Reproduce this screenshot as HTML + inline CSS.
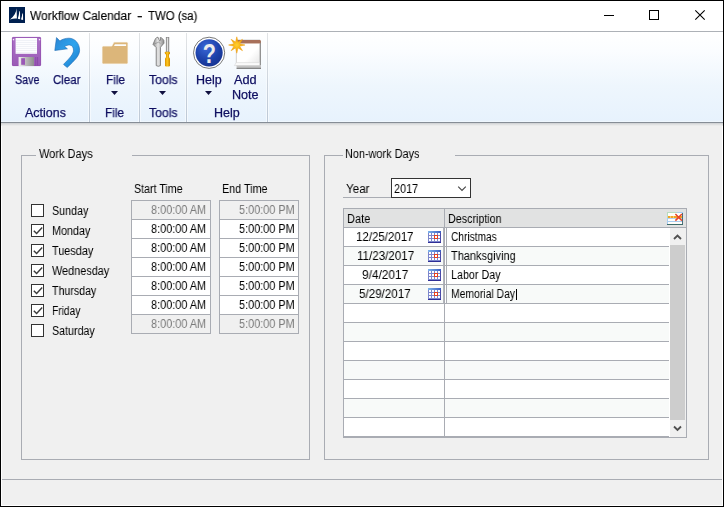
<!DOCTYPE html>
<html><head><meta charset="utf-8"><title>Workflow Calendar</title>
<style>
html,body{margin:0;padding:0;}
body{width:724px;height:507px;overflow:hidden;background:#f0f0f0;position:relative;font-family:"Liberation Sans",sans-serif;}
.a{position:absolute;}
.t{position:absolute;white-space:nowrap;transform-origin:0 0;line-height:normal;will-change:transform;}
.gl{position:absolute;background:#a9acb3;}
.cb{position:absolute;width:11px;height:11px;border:1px solid #333;background:#fff;}
.tb{position:absolute;width:78px;height:18px;border:1px solid #a9acb3;border-top:none;background:#fff;}
.tb.d{background:#f0f0f0;}
</style></head><body>
<!-- window frame -->
<div class="a" style="left:0;top:0;width:724px;height:507px;box-sizing:border-box;border:1px solid #000;"></div>
<div class="a" style="left:1px;top:1px;width:722px;height:505px;box-sizing:border-box;border:1px solid #fff;"></div>
<!-- title bar -->
<div class="a" style="left:1px;top:1px;width:722px;height:30px;background:#fff;"></div>
<div class="a" style="left:1px;top:31px;width:722px;height:1px;background:#adb1b7;"></div>
<svg class="a" style="left:9px;top:7px" width="16" height="16" viewBox="0 0 16 16"><rect width="16" height="16" fill="#002050"/><path d="M7.6 1.2 C7.4 5 5 9.5 1 12.6 C3.5 11.6 6 11.2 7.9 11.6 Z" fill="#fff"/><path d="M10.3 4.6 L11 4.1 L11.1 12.3 L8.8 11.8 C9.6 9.4 10.1 7 10.3 4.6Z" fill="#fff"/><path d="M13.3 6.8 L14 6.3 L14.1 12.9 L12 12.4 C12.7 10.4 13.1 8.6 13.3 6.8 Z" fill="#fff"/></svg>
<!-- window buttons -->
<svg class="a" style="left:600px;top:5px" width="120" height="22" viewBox="600 5 120 22" shape-rendering="crispEdges"><rect x="604" y="15" width="10" height="1" fill="#000"/><rect x="649.5" y="10.5" width="9" height="9" fill="none" stroke="#000" stroke-width="1"/><g shape-rendering="auto"><path d="M695.3 10.3 L704.7 19.7 M704.7 10.3 L695.3 19.7" stroke="#000" stroke-width="1.1" fill="none"/></g></svg>
<!-- ribbon -->
<div class="a" style="left:1px;top:32px;width:722px;height:90px;background:linear-gradient(#ffffff 0%,#fbfdff 20%,#eef6fd 60%,#e7f2fd 100%);"></div>
<div class="a" style="left:1px;top:121px;width:722px;height:1px;background:#eff7fe;"></div>
<div class="a" style="left:1px;top:122px;width:722px;height:1px;background:#868d96;"></div>
<div class="a" style="left:1px;top:123px;width:722px;height:1px;background:#d3d5d7;"></div>
<div class="a" style="left:1px;top:124px;width:722px;height:1px;background:#e0e1e2;"></div>
<div class="a" style="left:1px;top:125px;width:722px;height:1px;background:#eaebeb;"></div>
<!-- ribbon separators -->
<div class="a" style="left:88px;top:33px;width:3px;height:89px;background:linear-gradient(rgba(255,255,255,0.3),rgba(255,255,255,0.55));"></div><div class="a" style="left:89px;top:33px;width:1px;height:89px;background:linear-gradient(#e2e4e6,#bcc8d6);"></div>
<div class="a" style="left:138px;top:33px;width:3px;height:89px;background:linear-gradient(rgba(255,255,255,0.3),rgba(255,255,255,0.55));"></div><div class="a" style="left:139px;top:33px;width:1px;height:89px;background:linear-gradient(#e2e4e6,#bcc8d6);"></div>
<div class="a" style="left:185px;top:33px;width:3px;height:89px;background:linear-gradient(rgba(255,255,255,0.3),rgba(255,255,255,0.55));"></div><div class="a" style="left:186px;top:33px;width:1px;height:89px;background:linear-gradient(#e2e4e6,#bcc8d6);"></div>
<div class="a" style="left:266px;top:33px;width:3px;height:89px;background:linear-gradient(rgba(255,255,255,0.3),rgba(255,255,255,0.55));"></div><div class="a" style="left:267px;top:33px;width:1px;height:89px;background:linear-gradient(#e2e4e6,#bcc8d6);"></div>
<svg class="a" style="left:2px;top:33px" width="270" height="40" viewBox="2 33 270 40">
<defs>
<linearGradient id="gp" x1="0" y1="0" x2="0" y2="1"><stop offset="0" stop-color="#ad74c8"/><stop offset="1" stop-color="#9a5ab6"/></linearGradient>
<linearGradient id="gs" x1="0" y1="0" x2="1" y2="0"><stop offset="0" stop-color="#f2f2f2"/><stop offset="0.5" stop-color="#b8b8b8"/><stop offset="1" stop-color="#8e8e8e"/></linearGradient>
<linearGradient id="gb" x1="0" y1="0" x2="1" y2="1"><stop offset="0" stop-color="#2a86d4"/><stop offset="0.5" stop-color="#2ea4ee"/><stop offset="1" stop-color="#1a78c8"/></linearGradient>
<linearGradient id="gw" x1="0" y1="0" x2="1" y2="0"><stop offset="0" stop-color="#8a8a8a"/><stop offset="0.45" stop-color="#e6e6e6"/><stop offset="1" stop-color="#8c8c8c"/></linearGradient>
<linearGradient id="gy" x1="0" y1="0" x2="1" y2="0"><stop offset="0" stop-color="#d89000"/><stop offset="0.45" stop-color="#ffc820"/><stop offset="1" stop-color="#d08a00"/></linearGradient>
<radialGradient id="gh" cx="0.4" cy="0.3" r="0.8"><stop offset="0" stop-color="#3a68d8"/><stop offset="0.6" stop-color="#1c40a8"/><stop offset="1" stop-color="#16308c"/></radialGradient>
<linearGradient id="gn" x1="0" y1="0" x2="1" y2="1"><stop offset="0" stop-color="#ffffff"/><stop offset="0.6" stop-color="#ffffff"/><stop offset="1" stop-color="#e4e4e4"/></linearGradient>
<radialGradient id="gst" cx="0.5" cy="0.5" r="0.5"><stop offset="0" stop-color="#ffd030"/><stop offset="1" stop-color="#f09800"/></radialGradient>
</defs>
<!-- save -->
<rect x="12" y="37" width="29" height="29" rx="1.2" fill="url(#gp)"/>
<rect x="12.4" y="37.4" width="28.2" height="28.2" rx="1" fill="none" stroke="#9452b0" stroke-width="0.8"/>
<rect x="15.6" y="38" width="21.4" height="15.8" fill="#fdfdff"/>
<path d="M16 40.5H36.6M16 42.5H36.6M16 44.5H36.6M16 46.5H36.6M16 48.5H36.6M16 50.5H36.6M16 52.5H36.6" stroke="#e9ecf3" stroke-width="0.7"/>
<rect x="12.8" y="39" width="1.3" height="1.3" fill="#f4ecf8"/><rect x="38.9" y="39" width="1.3" height="1.3" fill="#f4ecf8"/>
<rect x="18.6" y="57" width="15.4" height="9" fill="url(#gs)"/>
<rect x="21.2" y="58.2" width="3.8" height="6.6" fill="#9a58b6"/>
<path d="M35.8 57V65.5M37.6 57V65.5" stroke="#8744a6" stroke-width="0.8"/>
<!-- clear -->
<path d="M56.5 37.6 L54.8 50.5 L67.4 48.8 L64.6 46.5 C66 45.5 67.6 45 69.6 45 C71.9 45 73.5 47.2 73.5 50.2 C73.5 54 70.2 57.6 63.5 64.4 L67.2 67.5 C74.8 60.2 79.6 55.8 79.6 50.2 C79.6 43.6 74.9 38.2 68.9 38.2 C65.6 38.2 62.2 39.2 59.9 41 Z" fill="url(#gb)" stroke="#1b68b2" stroke-width="0.6" stroke-linejoin="round"/>
<!-- file -->
<path d="M103.5 46 H111.8 L113.6 42.6 Q113.9 42 114.6 42 H126.8 Q128 42 128 43.2 V62.8 Q128 64 126.8 64 H103.2 Q102 64 102 62.8 V47.4 Q102 46 103.5 46 Z" fill="#dcb67a" stroke="#fbfaf6" stroke-width="0.8"/>
<path d="M114.9 44.2 H126.1 V46 H114 Z" fill="#fdfdfd"/>
<!-- tools -->
<path d="M156.2 65.6 V47.6 L153 44.4 L155.4 38.8 L156.6 37.6 L158 37.2 L159.6 40.8 L160.7 40.2 L160.1 37.7 L161.3 37.6 L163.8 40.2 L164 43.2 L160.5 47.2 V65.6 Q158.3 67 156.2 65.6 Z" fill="url(#gw)" stroke="#747474" stroke-width="0.8" stroke-linejoin="round"/>
<path d="M154.2 44 L158.6 42.2 L160.4 43.4" stroke="#808080" stroke-width="0.6" fill="none"/>
<rect x="166.2" y="37.3" width="2.7" height="14.6" fill="url(#gw)" stroke="#7c7c7c" stroke-width="0.6"/>
<rect x="164.9" y="51.8" width="5.1" height="2.4" rx="0.5" fill="url(#gy)"/>
<rect x="166" y="54" width="3" height="4.2" fill="url(#gy)"/>
<rect x="165" y="57.6" width="5" height="8.8" rx="1.2" fill="url(#gy)"/>
<!-- help -->
<circle cx="209.1" cy="52.8" r="15.6" fill="#fff" stroke="#6a6a6a" stroke-width="0.9"/>
<circle cx="209.1" cy="52.8" r="13.6" fill="url(#gh)"/>
<text x="0" y="63.4" text-anchor="middle" transform="translate(209.3 0) scale(0.8 1)" font-family="Liberation Sans, sans-serif" font-weight="bold" font-size="27" fill="#ececec">?</text>
<!-- add note -->
<path d="M259.6 41 H261 V68.6 H259.6 Z" fill="#8e8e8e"/>
<rect x="236.6" y="65" width="24.4" height="3.8" fill="#c4c4c4"/>
<rect x="236.6" y="67.8" width="24.4" height="1" fill="#747474"/>
<rect x="236.2" y="40" width="23.6" height="25.2" fill="url(#gn)" stroke="#b4b4b4" stroke-width="0.6"/>
<path d="M236.2 62.6 L234.4 65.6 H259.6 V62.6 Z" fill="#fafafa" stroke="#c8c8c8" stroke-width="0.4"/>
<rect x="236.2" y="40" width="24.6" height="3.6" rx="1" fill="#a8705a"/>
<rect x="236.2" y="43.2" width="23.4" height="0.7" fill="#d8c0b4"/>
<path d="M236.8 36.8 L238 42.1 L242.5 39.3 L239.7 43.8 L245 45 L239.7 46.2 L242.5 50.7 L238 47.9 L236.8 53.2 L235.6 47.9 L231.1 50.7 L233.9 46.2 L228.6 45 L233.9 43.8 L231.1 39.3 L235.6 42.1 Z" fill="url(#gst)" stroke="#f0a010" stroke-width="0.5"/>
</svg>

<!-- dropdown arrows -->
<svg class="a" style="left:100px;top:88px" width="130" height="10" viewBox="100 88 130 10"><path d="M111 91 L118 91 L114.5 95 Z M159 91 L166 91 L162.5 95 Z M205 91 L212 91 L208.5 95 Z" fill="#101040"/></svg>
<!-- status line -->
<div class="a" style="left:2px;top:479px;width:720px;height:1px;background:#a9acb3;"></div>
<!-- group boxes -->
<div class="gl" style="left:21px;top:155px;width:1px;height:305px;"></div>
<div class="gl" style="left:309px;top:155px;width:1px;height:305px;"></div>
<div class="gl" style="left:21px;top:459px;width:289px;height:1px;"></div>
<div class="gl" style="left:21px;top:155px;width:15px;height:1px;"></div>
<div class="gl" style="left:132px;top:155px;width:178px;height:1px;"></div>
<div class="gl" style="left:324px;top:155px;width:1px;height:305px;"></div>
<div class="gl" style="left:708px;top:155px;width:1px;height:305px;"></div>
<div class="gl" style="left:324px;top:459px;width:385px;height:1px;"></div>
<div class="gl" style="left:324px;top:155px;width:19px;height:1px;"></div>
<div class="gl" style="left:455px;top:155px;width:254px;height:1px;"></div>
<div class="cb" style="left:31px;top:204px;"></div>
<div class="cb" style="left:31px;top:224px;"></div>
<svg class="a" style="left:31px;top:224px" width="13" height="13" viewBox="0 0 13 13"><path d="M2.8 6.8 L5.6 9.6 L11.2 3.6" stroke="#3a3a3a" stroke-width="1.4" fill="none"/></svg>
<div class="cb" style="left:31px;top:244px;"></div>
<svg class="a" style="left:31px;top:244px" width="13" height="13" viewBox="0 0 13 13"><path d="M2.8 6.8 L5.6 9.6 L11.2 3.6" stroke="#3a3a3a" stroke-width="1.4" fill="none"/></svg>
<div class="cb" style="left:31px;top:264px;"></div>
<svg class="a" style="left:31px;top:264px" width="13" height="13" viewBox="0 0 13 13"><path d="M2.8 6.8 L5.6 9.6 L11.2 3.6" stroke="#3a3a3a" stroke-width="1.4" fill="none"/></svg>
<div class="cb" style="left:31px;top:284px;"></div>
<svg class="a" style="left:31px;top:284px" width="13" height="13" viewBox="0 0 13 13"><path d="M2.8 6.8 L5.6 9.6 L11.2 3.6" stroke="#3a3a3a" stroke-width="1.4" fill="none"/></svg>
<div class="cb" style="left:31px;top:304px;"></div>
<svg class="a" style="left:31px;top:304px" width="13" height="13" viewBox="0 0 13 13"><path d="M2.8 6.8 L5.6 9.6 L11.2 3.6" stroke="#3a3a3a" stroke-width="1.4" fill="none"/></svg>
<div class="cb" style="left:31px;top:324px;"></div>
<div class="a" style="left:131px;top:200px;width:80px;height:1px;background:#a9acb3;"></div>
<div class="tb d" style="left:131px;top:201px;"></div>
<div class="tb" style="left:131px;top:220px;"></div>
<div class="tb" style="left:131px;top:239px;"></div>
<div class="tb" style="left:131px;top:258px;"></div>
<div class="tb" style="left:131px;top:277px;"></div>
<div class="tb" style="left:131px;top:296px;"></div>
<div class="tb d" style="left:131px;top:315px;"></div>
<div class="a" style="left:219px;top:200px;width:80px;height:1px;background:#a9acb3;"></div>
<div class="tb d" style="left:219px;top:201px;"></div>
<div class="tb" style="left:219px;top:220px;"></div>
<div class="tb" style="left:219px;top:239px;"></div>
<div class="tb" style="left:219px;top:258px;"></div>
<div class="tb" style="left:219px;top:277px;"></div>
<div class="tb" style="left:219px;top:296px;"></div>
<div class="tb d" style="left:219px;top:315px;"></div>
<div class="a" style="left:343px;top:197px;width:48px;height:1px;background:#a9acb3;"></div>
<div class="a" style="left:391px;top:178px;width:78px;height:18px;border:1px solid #333;background:#fff;"></div>
<svg class="a" style="left:456px;top:184px" width="12" height="10" viewBox="0 0 12 10"><path d="M2.2 2.6 L6 6.4 L9.8 2.6" stroke="#444" stroke-width="1.1" fill="none"/></svg>
<div class="a" style="left:343px;top:208px;width:344px;height:230px;background:#a9acb3;"></div>
<div class="a" style="left:344px;top:209px;width:100px;height:18px;background:#e1e2e2;"></div>
<div class="a" style="left:445px;top:209px;width:241px;height:18px;background:#e1e2e2;"></div>
<div class="a" style="left:344px;top:228px;width:99px;height:18px;background:#fff;"></div>
<div class="a" style="left:443px;top:228px;width:1px;height:18px;background:#b3b5bb;"></div>
<div class="a" style="left:445px;top:228px;width:1px;height:18px;background:#fff;"></div>
<div class="a" style="left:447px;top:228px;width:223px;height:18px;background:#fff;"></div>
<div class="a" style="left:344px;top:247px;width:99px;height:18px;background:#f8faf9;"></div>
<div class="a" style="left:443px;top:247px;width:1px;height:18px;background:#b3b5bb;"></div>
<div class="a" style="left:445px;top:247px;width:1px;height:18px;background:#fff;"></div>
<div class="a" style="left:447px;top:247px;width:223px;height:18px;background:#f8faf9;"></div>
<div class="a" style="left:344px;top:266px;width:99px;height:18px;background:#fff;"></div>
<div class="a" style="left:443px;top:266px;width:1px;height:18px;background:#b3b5bb;"></div>
<div class="a" style="left:445px;top:266px;width:1px;height:18px;background:#fff;"></div>
<div class="a" style="left:447px;top:266px;width:223px;height:18px;background:#fff;"></div>
<div class="a" style="left:344px;top:285px;width:99px;height:18px;background:#f8faf9;"></div>
<div class="a" style="left:443px;top:285px;width:1px;height:18px;background:#b3b5bb;"></div>
<div class="a" style="left:445px;top:285px;width:1px;height:18px;background:#fff;"></div>
<div class="a" style="left:447px;top:285px;width:223px;height:18px;background:#f8faf9;"></div>
<div class="a" style="left:344px;top:304px;width:100px;height:18px;background:#fff;"></div>
<div class="a" style="left:445px;top:304px;width:225px;height:18px;background:#fff;"></div>
<div class="a" style="left:344px;top:323px;width:100px;height:18px;background:#f8faf9;"></div>
<div class="a" style="left:445px;top:323px;width:225px;height:18px;background:#f8faf9;"></div>
<div class="a" style="left:344px;top:342px;width:100px;height:18px;background:#fff;"></div>
<div class="a" style="left:445px;top:342px;width:225px;height:18px;background:#fff;"></div>
<div class="a" style="left:344px;top:361px;width:100px;height:18px;background:#f8faf9;"></div>
<div class="a" style="left:445px;top:361px;width:225px;height:18px;background:#f8faf9;"></div>
<div class="a" style="left:344px;top:380px;width:100px;height:18px;background:#fff;"></div>
<div class="a" style="left:445px;top:380px;width:225px;height:18px;background:#fff;"></div>
<div class="a" style="left:344px;top:399px;width:100px;height:18px;background:#f8faf9;"></div>
<div class="a" style="left:445px;top:399px;width:225px;height:18px;background:#f8faf9;"></div>
<div class="a" style="left:344px;top:418px;width:100px;height:18px;background:#fff;"></div>
<div class="a" style="left:445px;top:418px;width:225px;height:18px;background:#fff;"></div>
<div class="a" style="left:669px;top:228px;width:1px;height:209px;background:#fff;"></div>
<div class="a" style="left:670px;top:228px;width:16px;height:209px;background:#f0f0f0;"></div>
<div class="a" style="left:670px;top:245px;width:15px;height:175px;background:#cdcdcd;"></div>
<svg class="a" style="left:670px;top:228px" width="16" height="17" viewBox="0 0 16 17"><path d="M4 11 L7.5 7.5 L11 11" stroke="#505050" stroke-width="1.8" fill="none"/></svg>
<svg class="a" style="left:670px;top:420px" width="16" height="17" viewBox="0 0 16 17"><path d="M4 6.5 L7.5 10 L11 6.5" stroke="#505050" stroke-width="1.8" fill="none"/></svg>
<svg class="a" style="left:428px;top:231px" width="13" height="12" viewBox="0 0 13 12" shape-rendering="crispEdges"><defs><linearGradient id="cg" x1="0" x2="1" y1="0" y2="0"><stop offset="0" stop-color="#7eb4ec"/><stop offset="1" stop-color="#3a5ec2"/></linearGradient></defs><rect width="13" height="12" fill="#7c86cc"/><rect x="0" y="0" width="13" height="2" fill="url(#cg)"/><rect x="12" y="2" width="1" height="10" fill="#4a4aa8"/><rect x="0" y="11" width="13" height="1" fill="#2e2e96"/><g fill="#fff"><rect x="1" y="2" width="2" height="2"/><rect x="4" y="2" width="2" height="2"/><rect x="7" y="2" width="2" height="2"/><rect x="10" y="2" width="2" height="2"/><rect x="1" y="5" width="2" height="2"/><rect x="4" y="5" width="2" height="2"/><rect x="10" y="5" width="2" height="2"/><rect x="1" y="8" width="2" height="2"/><rect x="4" y="8" width="2" height="2"/><rect x="7" y="8" width="2" height="2"/><rect x="10" y="8" width="2" height="2"/></g><rect x="6" y="4" width="4" height="4" fill="#e8401c"/><rect x="7" y="5" width="2" height="2" fill="#fff"/></svg>
<svg class="a" style="left:428px;top:250px" width="13" height="12" viewBox="0 0 13 12" shape-rendering="crispEdges"><defs><linearGradient id="cg" x1="0" x2="1" y1="0" y2="0"><stop offset="0" stop-color="#7eb4ec"/><stop offset="1" stop-color="#3a5ec2"/></linearGradient></defs><rect width="13" height="12" fill="#7c86cc"/><rect x="0" y="0" width="13" height="2" fill="url(#cg)"/><rect x="12" y="2" width="1" height="10" fill="#4a4aa8"/><rect x="0" y="11" width="13" height="1" fill="#2e2e96"/><g fill="#fff"><rect x="1" y="2" width="2" height="2"/><rect x="4" y="2" width="2" height="2"/><rect x="7" y="2" width="2" height="2"/><rect x="10" y="2" width="2" height="2"/><rect x="1" y="5" width="2" height="2"/><rect x="4" y="5" width="2" height="2"/><rect x="10" y="5" width="2" height="2"/><rect x="1" y="8" width="2" height="2"/><rect x="4" y="8" width="2" height="2"/><rect x="7" y="8" width="2" height="2"/><rect x="10" y="8" width="2" height="2"/></g><rect x="6" y="4" width="4" height="4" fill="#e8401c"/><rect x="7" y="5" width="2" height="2" fill="#fff"/></svg>
<svg class="a" style="left:428px;top:269px" width="13" height="12" viewBox="0 0 13 12" shape-rendering="crispEdges"><defs><linearGradient id="cg" x1="0" x2="1" y1="0" y2="0"><stop offset="0" stop-color="#7eb4ec"/><stop offset="1" stop-color="#3a5ec2"/></linearGradient></defs><rect width="13" height="12" fill="#7c86cc"/><rect x="0" y="0" width="13" height="2" fill="url(#cg)"/><rect x="12" y="2" width="1" height="10" fill="#4a4aa8"/><rect x="0" y="11" width="13" height="1" fill="#2e2e96"/><g fill="#fff"><rect x="1" y="2" width="2" height="2"/><rect x="4" y="2" width="2" height="2"/><rect x="7" y="2" width="2" height="2"/><rect x="10" y="2" width="2" height="2"/><rect x="1" y="5" width="2" height="2"/><rect x="4" y="5" width="2" height="2"/><rect x="10" y="5" width="2" height="2"/><rect x="1" y="8" width="2" height="2"/><rect x="4" y="8" width="2" height="2"/><rect x="7" y="8" width="2" height="2"/><rect x="10" y="8" width="2" height="2"/></g><rect x="6" y="4" width="4" height="4" fill="#e8401c"/><rect x="7" y="5" width="2" height="2" fill="#fff"/></svg>
<svg class="a" style="left:428px;top:288px" width="13" height="12" viewBox="0 0 13 12" shape-rendering="crispEdges"><defs><linearGradient id="cg" x1="0" x2="1" y1="0" y2="0"><stop offset="0" stop-color="#7eb4ec"/><stop offset="1" stop-color="#3a5ec2"/></linearGradient></defs><rect width="13" height="12" fill="#7c86cc"/><rect x="0" y="0" width="13" height="2" fill="url(#cg)"/><rect x="12" y="2" width="1" height="10" fill="#4a4aa8"/><rect x="0" y="11" width="13" height="1" fill="#2e2e96"/><g fill="#fff"><rect x="1" y="2" width="2" height="2"/><rect x="4" y="2" width="2" height="2"/><rect x="7" y="2" width="2" height="2"/><rect x="10" y="2" width="2" height="2"/><rect x="1" y="5" width="2" height="2"/><rect x="4" y="5" width="2" height="2"/><rect x="10" y="5" width="2" height="2"/><rect x="1" y="8" width="2" height="2"/><rect x="4" y="8" width="2" height="2"/><rect x="7" y="8" width="2" height="2"/><rect x="10" y="8" width="2" height="2"/></g><rect x="6" y="4" width="4" height="4" fill="#e8401c"/><rect x="7" y="5" width="2" height="2" fill="#fff"/></svg>
<svg class="a" style="left:667px;top:212px" width="16" height="13" viewBox="0 0 16 13"><g shape-rendering="crispEdges"><rect width="16" height="13" fill="#fffefa"/><rect x="0" y="0" width="10" height="1" fill="#b8dcc0"/><rect x="10" y="0" width="6" height="1" fill="#a8ccf0"/><rect x="0" y="0" width="1" height="6" fill="#b8dcc0"/><rect x="0" y="6" width="1" height="7" fill="#a8ccf0"/><rect x="1" y="4" width="14" height="2" fill="#f2a424"/><rect x="3" y="4" width="1" height="2" fill="#f8c870"/><rect x="6" y="4" width="1" height="2" fill="#f8c870"/><rect x="1" y="6" width="14" height="1" fill="#b4d2f2"/><rect x="1" y="9" width="14" height="1" fill="#a8ccf0"/><rect x="15" y="1" width="1" height="12" fill="#4a6e7a"/><rect x="0" y="12" width="16" height="1" fill="#3c6a68"/></g><path d="M8.4 2 L14.9 8.6 M14.9 2 L8.4 8.6" stroke="#e8442a" stroke-width="1.5"/></svg>
<div class="a" style="left:516px;top:289px;width:1px;height:11px;background:#000;"></div>
<span id="t0" class="t" style="left:29.92px;top:9.49px;font-size:12.5px;color:#000;transform:scaleX(0.9599);-webkit-text-stroke:0.15px #000;">Workflow Calendar</span>
<span id="t1" class="t" style="left:136.69px;top:9.49px;font-size:12.5px;color:#000;transform:scaleX(1.3460);-webkit-text-stroke:0.15px #000;">-</span>
<span id="t2" class="t" style="left:148.20px;top:9.49px;font-size:12.5px;color:#000;transform:scaleX(0.9109);-webkit-text-stroke:0.15px #000;">TWO (sa)</span>
<span id="t3" class="t" style="-webkit-text-stroke:0.25px currentColor;left:14.98px;top:73.49px;font-size:12.5px;color:#0e0e60;transform:scaleX(0.8608);">Save</span>
<span id="t4" class="t" style="-webkit-text-stroke:0.25px currentColor;left:53.05px;top:73.49px;font-size:12.5px;color:#0e0e60;transform:scaleX(0.9207);">Clear</span>
<span id="t5" class="t" style="-webkit-text-stroke:0.25px currentColor;left:105.84px;top:73.49px;font-size:12.5px;color:#0e0e60;transform:scaleX(0.9390);">File</span>
<span id="t6" class="t" style="-webkit-text-stroke:0.25px currentColor;left:149.11px;top:73.49px;font-size:12.5px;color:#0e0e60;transform:scaleX(0.9754);">Tools</span>
<span id="t7" class="t" style="-webkit-text-stroke:0.25px currentColor;left:195.80px;top:73.49px;font-size:12.5px;color:#0e0e60;transform:scaleX(0.9952);">Help</span>
<span id="t8" class="t" style="-webkit-text-stroke:0.25px currentColor;left:233.89px;top:73.49px;font-size:12.5px;color:#0e0e60;transform:scaleX(1.0166);">Add</span>
<span id="t9" class="t" style="-webkit-text-stroke:0.25px currentColor;left:232.30px;top:88.49px;font-size:12.5px;color:#0e0e60;transform:scaleX(1.0077);">Note</span>
<span id="t10" class="t" style="-webkit-text-stroke:0.25px currentColor;left:24.70px;top:106.49px;font-size:12.5px;color:#0e0e60;transform:scaleX(0.9975);">Actions</span>
<span id="t11" class="t" style="-webkit-text-stroke:0.25px currentColor;left:104.94px;top:106.49px;font-size:12.5px;color:#0e0e60;transform:scaleX(0.9390);">File</span>
<span id="t12" class="t" style="-webkit-text-stroke:0.25px currentColor;left:149.11px;top:106.49px;font-size:12.5px;color:#0e0e60;transform:scaleX(0.9754);">Tools</span>
<span id="t13" class="t" style="-webkit-text-stroke:0.25px currentColor;left:214.01px;top:106.49px;font-size:12.5px;color:#0e0e60;transform:scaleX(0.9829);">Help</span>
<span id="t14" class="t" style="left:38.97px;top:147.49px;font-size:12.5px;color:#000;transform:scaleX(0.8795);">Work Days</span>
<span id="t15" class="t" style="left:52.19px;top:204.49px;font-size:12.5px;color:#000;transform:scaleX(0.8567);">Sunday</span>
<span id="t16" class="t" style="left:52.18px;top:224.49px;font-size:12.5px;color:#000;transform:scaleX(0.8617);">Monday</span>
<span id="t17" class="t" style="left:52.18px;top:244.49px;font-size:12.5px;color:#000;transform:scaleX(0.8707);">Tuesday</span>
<span id="t18" class="t" style="left:52.18px;top:264.49px;font-size:12.5px;color:#000;transform:scaleX(0.8700);">Wednesday</span>
<span id="t19" class="t" style="left:52.19px;top:284.49px;font-size:12.5px;color:#000;transform:scaleX(0.8505);">Thursday</span>
<span id="t20" class="t" style="left:52.21px;top:304.49px;font-size:12.5px;color:#000;transform:scaleX(0.8171);">Friday</span>
<span id="t21" class="t" style="left:52.19px;top:324.49px;font-size:12.5px;color:#000;transform:scaleX(0.8540);">Saturday</span>
<span id="t22" class="t" style="left:133.89px;top:182.49px;font-size:12.5px;color:#000;transform:scaleX(0.8535);">Start Time</span>
<span id="t23" class="t" style="left:221.98px;top:182.49px;font-size:12.5px;color:#000;transform:scaleX(0.8622);">End Time</span>
<span id="t24" class="t" style="left:151.08px;top:203.49px;font-size:12.5px;color:#7a7a7a;transform:scaleX(0.8719);">8:00:00 AM</span>
<span id="t25" class="t" style="left:238.88px;top:203.49px;font-size:12.5px;color:#7a7a7a;transform:scaleX(0.8703);">5:00:00 PM</span>
<span id="t26" class="t" style="left:151.08px;top:222.49px;font-size:12.5px;color:#000;transform:scaleX(0.8719);">8:00:00 AM</span>
<span id="t27" class="t" style="left:238.88px;top:222.49px;font-size:12.5px;color:#000;transform:scaleX(0.8703);">5:00:00 PM</span>
<span id="t28" class="t" style="left:151.08px;top:241.49px;font-size:12.5px;color:#000;transform:scaleX(0.8719);">8:00:00 AM</span>
<span id="t29" class="t" style="left:238.88px;top:241.49px;font-size:12.5px;color:#000;transform:scaleX(0.8703);">5:00:00 PM</span>
<span id="t30" class="t" style="left:151.08px;top:260.49px;font-size:12.5px;color:#000;transform:scaleX(0.8719);">8:00:00 AM</span>
<span id="t31" class="t" style="left:238.88px;top:260.49px;font-size:12.5px;color:#000;transform:scaleX(0.8703);">5:00:00 PM</span>
<span id="t32" class="t" style="left:151.08px;top:279.49px;font-size:12.5px;color:#000;transform:scaleX(0.8719);">8:00:00 AM</span>
<span id="t33" class="t" style="left:238.88px;top:279.49px;font-size:12.5px;color:#000;transform:scaleX(0.8703);">5:00:00 PM</span>
<span id="t34" class="t" style="left:151.08px;top:298.49px;font-size:12.5px;color:#000;transform:scaleX(0.8719);">8:00:00 AM</span>
<span id="t35" class="t" style="left:238.88px;top:298.49px;font-size:12.5px;color:#000;transform:scaleX(0.8703);">5:00:00 PM</span>
<span id="t36" class="t" style="left:151.08px;top:317.49px;font-size:12.5px;color:#7a7a7a;transform:scaleX(0.8719);">8:00:00 AM</span>
<span id="t37" class="t" style="left:238.88px;top:317.49px;font-size:12.5px;color:#7a7a7a;transform:scaleX(0.8703);">5:00:00 PM</span>
<span id="t38" class="t" style="left:345.48px;top:147.49px;font-size:12.5px;color:#000;transform:scaleX(0.8713);">Non-work Days</span>
<span id="t39" class="t" style="left:346.24px;top:182.49px;font-size:12.5px;color:#000;transform:scaleX(0.9308);">Year</span>
<span id="t40" class="t" style="left:394.08px;top:182.49px;font-size:12.5px;color:#000;transform:scaleX(0.8680);">2017</span>
<span id="t41" class="t" style="left:347.07px;top:211.99px;font-size:12.5px;color:#000;transform:scaleX(0.8847);">Date</span>
<span id="t42" class="t" style="left:447.99px;top:211.99px;font-size:12.5px;color:#000;transform:scaleX(0.8576);">Description</span>
<span id="t43" class="t" style="left:356.45px;top:230.49px;font-size:12.5px;color:#000;transform:scaleX(0.9191);">12/25/2017</span>
<span id="t44" class="t" style="left:451.21px;top:230.49px;font-size:12.5px;color:#000;transform:scaleX(0.8118);">Christmas</span>
<span id="t45" class="t" style="left:356.84px;top:249.49px;font-size:12.5px;color:#000;transform:scaleX(0.9265);">11/23/2017</span>
<span id="t46" class="t" style="left:451.17px;top:249.49px;font-size:12.5px;color:#000;transform:scaleX(0.8778);">Thanksgiving</span>
<span id="t47" class="t" style="left:362.13px;top:268.49px;font-size:12.5px;color:#000;transform:scaleX(0.9500);">9/4/2017</span>
<span id="t48" class="t" style="left:451.18px;top:268.49px;font-size:12.5px;color:#000;transform:scaleX(0.8586);">Labor Day</span>
<span id="t49" class="t" style="left:359.34px;top:287.49px;font-size:12.5px;color:#000;transform:scaleX(0.9281);">5/29/2017</span>
<span id="t50" class="t" style="left:451.20px;top:287.49px;font-size:12.5px;color:#000;transform:scaleX(0.8313);">Memorial Day</span>
</body></html>
